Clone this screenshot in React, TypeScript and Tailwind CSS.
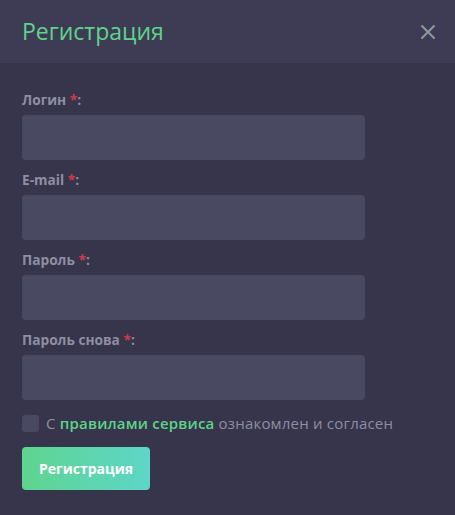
import React, { useState } from 'react';

const fields = [
    { label: 'Логин', type: 'text' },
    { label: 'E-mail', type: 'email' },
    { label: 'Пароль', type: 'password' },
    { label: 'Пароль снова', type: 'password' },
];

const App: React.FC = () => {
    const [agreed, setAgreed] = useState(false);

    return (
        <div
            className="min-h-[515px] w-full bg-[#36354b]"
            style={{ fontFamily: '"Open Sans", "Noto Sans", sans-serif' }}
        >
            <header className="flex h-[63px] items-center justify-between bg-[#3d3c54] pl-[22px] pr-[19px]">
                <h2 className="text-[23px] leading-none text-[#5fd38a]">Регистрация</h2>
                <button type="button" aria-label="Закрыть" className="text-[#8e9a98]">
                    <svg width="16" height="16" viewBox="0 0 16 16" fill="none" stroke="currentColor" strokeWidth="2" strokeLinecap="round">
                        <path d="M2 2l12 12M14 2L2 14" />
                    </svg>
                </button>
            </header>

            <form className="px-[22px] pt-[28px]" onSubmit={(e) => e.preventDefault()}>
                <div className="flex flex-col gap-[11px]">
                    {fields.map((f) => (
                        <label key={f.label} className="block w-[343px]">
                            <span className="block text-[13.7px] font-bold leading-[18px] text-[#8f8ea3]">
                                {f.label} <span className="text-[#d0394b]">*</span>:
                            </span>
                            <input
                                type={f.type}
                                className="mt-[6px] block h-[45px] w-full rounded-[4px] bg-[#4a4962] px-3 text-sm text-white outline-none"
                            />
                        </label>
                    ))}
                </div>

                <div className="mt-[12px] flex items-center gap-[7px]">
                    <button
                        type="button"
                        onClick={() => setAgreed((v) => !v)}
                        className="h-[17px] w-[17px] rounded-[3px] bg-[#4a4962]"
                        aria-pressed={agreed}
                    />
                    <span className="text-[15px] tracking-[0.2px] text-[#8f8ea3]">
                        С <span className="font-semibold text-[#5fd38a]">правилами сервиса</span> ознакомлен и согласен
                    </span>
                </div>

                <button
                    type="submit"
                    className="mt-[12px] h-[43px] w-[128px] rounded-[4px] bg-gradient-to-r from-[#5fd48e] to-[#5ed6c8] text-[14px] font-bold text-white"
                >
                    Регистрация
                </button>
            </form>
        </div>
    );
};

export default App;
